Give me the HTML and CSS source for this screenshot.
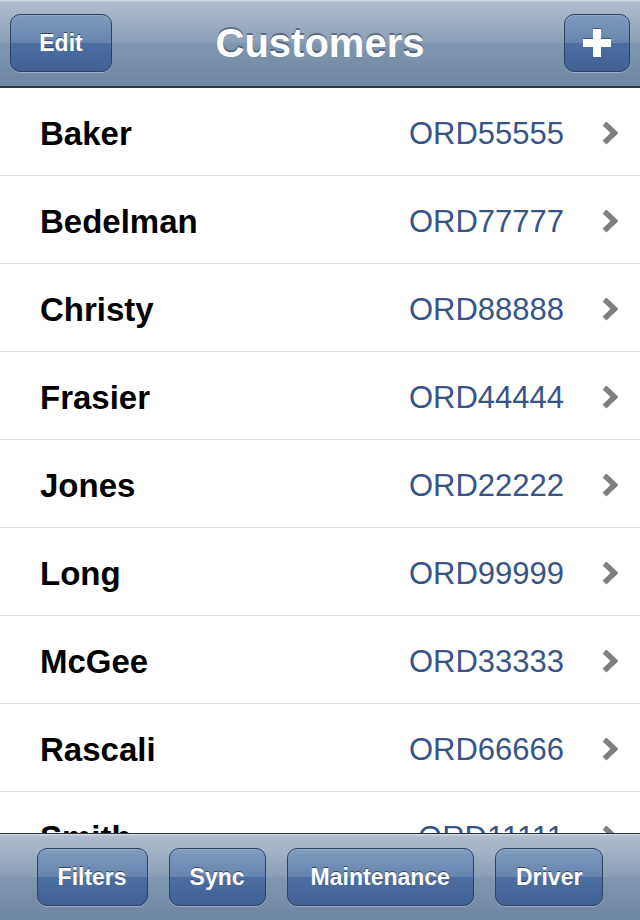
FILE: index.html
```html
<!DOCTYPE html>
<html>
<head>
<meta charset="utf-8">
<title>Customers</title>
<link rel="stylesheet" href="styles.css">
</head>
<body>
<div class="screen">
  <header class="navbar">
    <div class="nav-left"><button class="bar-btn edit-btn">Edit</button></div>
    <h1 class="title">Customers</h1>
    <div class="nav-right">
      <button class="bar-btn add-btn" aria-label="Add">
        <svg width="28" height="28" viewBox="0 0 28 28"><rect x="10" y="0" width="8" height="28" fill="#fff"/><rect x="0" y="10" width="28" height="8" fill="#fff"/></svg>
      </button>
    </div>
  </header>
  <main class="list">
    <div class="row"><span class="name">Baker</span><span class="order">ORD55555</span><svg class="chev" width="16" height="24" viewBox="0 0 16 24"><polyline points="2.5,2.5 12.5,12 2.5,21.5" fill="none" stroke="#7f7f7f" stroke-width="5.5"/></svg></div>
    <div class="row"><span class="name">Bedelman</span><span class="order">ORD77777</span><svg class="chev" width="16" height="24" viewBox="0 0 16 24"><polyline points="2.5,2.5 12.5,12 2.5,21.5" fill="none" stroke="#7f7f7f" stroke-width="5.5"/></svg></div>
    <div class="row"><span class="name">Christy</span><span class="order">ORD88888</span><svg class="chev" width="16" height="24" viewBox="0 0 16 24"><polyline points="2.5,2.5 12.5,12 2.5,21.5" fill="none" stroke="#7f7f7f" stroke-width="5.5"/></svg></div>
    <div class="row"><span class="name">Frasier</span><span class="order">ORD44444</span><svg class="chev" width="16" height="24" viewBox="0 0 16 24"><polyline points="2.5,2.5 12.5,12 2.5,21.5" fill="none" stroke="#7f7f7f" stroke-width="5.5"/></svg></div>
    <div class="row"><span class="name">Jones</span><span class="order">ORD22222</span><svg class="chev" width="16" height="24" viewBox="0 0 16 24"><polyline points="2.5,2.5 12.5,12 2.5,21.5" fill="none" stroke="#7f7f7f" stroke-width="5.5"/></svg></div>
    <div class="row"><span class="name">Long</span><span class="order">ORD99999</span><svg class="chev" width="16" height="24" viewBox="0 0 16 24"><polyline points="2.5,2.5 12.5,12 2.5,21.5" fill="none" stroke="#7f7f7f" stroke-width="5.5"/></svg></div>
    <div class="row"><span class="name">McGee</span><span class="order">ORD33333</span><svg class="chev" width="16" height="24" viewBox="0 0 16 24"><polyline points="2.5,2.5 12.5,12 2.5,21.5" fill="none" stroke="#7f7f7f" stroke-width="5.5"/></svg></div>
    <div class="row"><span class="name">Rascali</span><span class="order">ORD66666</span><svg class="chev" width="16" height="24" viewBox="0 0 16 24"><polyline points="2.5,2.5 12.5,12 2.5,21.5" fill="none" stroke="#7f7f7f" stroke-width="5.5"/></svg></div>
    <div class="row"><span class="name">Smith</span><span class="order">ORD11111</span><svg class="chev" width="16" height="24" viewBox="0 0 16 24"><polyline points="2.5,2.5 12.5,12 2.5,21.5" fill="none" stroke="#7f7f7f" stroke-width="5.5"/></svg></div>
  </main>
  <footer class="toolbar">
    <button class="bar-btn">Filters</button>
    <button class="bar-btn">Sync</button>
    <button class="bar-btn wide">Maintenance</button>
    <button class="bar-btn">Driver</button>
  </footer>
</div>
</body>
</html>
```
FILE: styles.css
```css
html, body {
  margin: 0;
  padding: 0;
  background: #fff;
}
body {
  font-family: "Liberation Sans", Arial, sans-serif;
}
.screen {
  width: 640px;
  height: 920px;
  display: flex;
  flex-direction: column;
  overflow: hidden;
}
.navbar {
  height: 86px;
  flex: 0 0 auto;
  border-bottom: 2px solid #2d3541;
  display: grid;
  grid-template-columns: 1fr auto 1fr;
  align-items: center;
  padding: 0 10px;
  background: linear-gradient(to bottom, #cdd5df 0, #cdd5df 1px, #b1bdce 2px, #8b9db5 50%, #8196b0 50%, #6e85a3 100%);
}
.nav-left {
  display: flex;
  justify-content: flex-start;
}
.nav-right {
  display: flex;
  justify-content: flex-end;
}
.title {
  margin: 0;
  font-size: 40px;
  font-weight: bold;
  color: #fff;
  text-shadow: 0 -2px 0 rgba(40, 50, 70, 0.5);
}
.bar-btn {
  height: 58px;
  padding: 0 20px;
  border: 1px solid #2e4264;
  border-radius: 10px;
  font-family: "Liberation Sans", Arial, sans-serif;
  font-size: 23px;
  font-weight: bold;
  color: #fff;
  text-shadow: 0 -1px 0 rgba(20, 35, 60, 0.6);
  background: linear-gradient(to bottom, #819abd 0, #6684ae 50%, #4d6ea1 50%, #3f6196 100%);
  box-shadow: 0 1px 0 rgba(255, 255, 255, 0.3), inset 0 1px 0 rgba(255, 255, 255, 0.15);
  display: flex;
  align-items: center;
  justify-content: center;
}
.bar-btn.wide {
  padding: 0 23px;
}
.edit-btn {
  width: 102px;
  padding: 0;
}
.add-btn {
  width: 66px;
  padding: 0;
}
.add-btn svg {
  filter: drop-shadow(0 -1px 0 rgba(20, 35, 60, 0.5));
}
.list {
  flex: 1 1 auto;
  overflow: hidden;
}
.row {
  height: 83px;
  padding: 4px 22px 0 40px;
  border-bottom: 1px solid #e0e0e0;
  display: flex;
  align-items: center;
}
.name {
  flex: 1 1 auto;
  font-size: 33px;
  font-weight: bold;
  color: #000;
}
.order {
  font-size: 31px;
  color: #385487;
  margin-right: 38px;
}
.chev {
  flex: 0 0 auto;
  margin-top: -2px;
}
.toolbar {
  height: 86px;
  flex: 0 0 auto;
  border-top: 1px solid #2d3541;
  display: flex;
  align-items: center;
  justify-content: center;
  gap: 21px;
  background: linear-gradient(to bottom, #cdd5df 0, #cdd5df 1px, #b1bdce 2px, #8b9db5 50%, #8196b0 50%, #6e85a3 100%);
}
```
